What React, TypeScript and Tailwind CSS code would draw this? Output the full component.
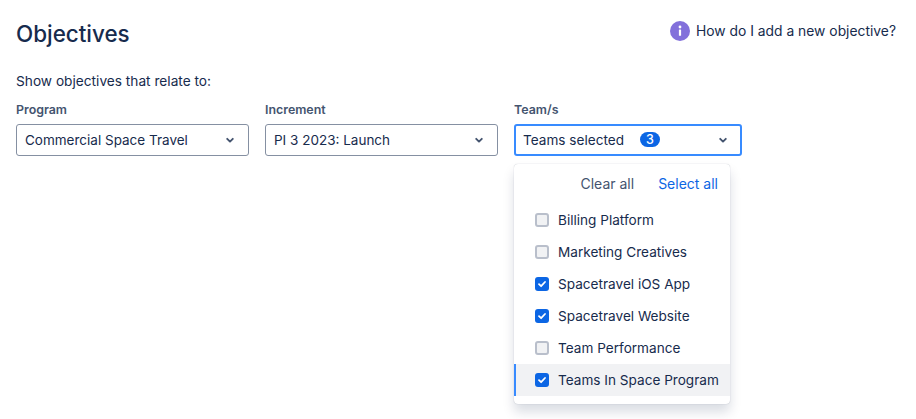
const TEAMS = [
  { name: "Billing Platform", checked: false },
  { name: "Marketing Creatives", checked: false },
  { name: "Spacetravel iOS App", checked: true },
  { name: "Spacetravel Website", checked: true },
  { name: "Team Performance", checked: false },
  { name: "Teams In Space Program", checked: true, active: true },
];

function Chevron() {
  return (
    <svg width="16" height="16" viewBox="0 0 16 16" fill="none" className="shrink-0">
      <path d="M5.2 6.8 8 9.6l2.8-2.8" stroke="#44546f" strokeWidth="1.9" strokeLinecap="round" strokeLinejoin="round" />
    </svg>
  );
}

function Checkbox({ checked }: { checked: boolean }) {
  if (!checked) {
    return <span className="h-[14px] w-[14px] shrink-0 rounded-[3px] border-2 border-[#b9bfcb] bg-[#f1f2f4]" />;
  }
  return (
    <span className="flex h-[14px] w-[14px] shrink-0 items-center justify-center rounded-[3px] bg-[#0c66e4]">
      <svg width="10" height="10" viewBox="0 0 10 10" fill="none">
        <path d="M2 5.2 4.1 7.2 8 3" stroke="#fff" strokeWidth="1.8" strokeLinecap="round" strokeLinejoin="round" />
      </svg>
    </span>
  );
}

function Field({ label, value, width }: { label: string; value: string; width: string }) {
  return (
    <div className={width}>
      <div className="mb-[6px] h-4 text-[12.4px] leading-4 font-semibold text-[#44546f]">{label}</div>
      <div className="flex h-8 items-center justify-between rounded-[3px] border border-[#8590a2] pr-[10px] pl-2 text-[13.5px] text-[#172b4d]">
        <span>{value}</span>
        <Chevron />
      </div>
    </div>
  );
}

export default function App() {
  return (
    <div className="h-[419px] w-[916px] overflow-hidden bg-white px-4 font-['Inter',sans-serif] text-[#172b4d]">
      <header className="flex items-start justify-between pt-[20px] pr-[4px]">
        <h1 className="text-[22.4px] leading-7 font-medium text-[#172b4d]">Objectives</h1>
        <a className="flex items-center gap-[6px] pt-[1px] text-[13.85px] leading-5">
          <span className="flex h-5 w-5 items-center justify-center rounded-full bg-[#8270db]">
            <svg width="10" height="12" viewBox="0 0 10 12" fill="#fff">
              <circle cx="5" cy="2" r="1.4" />
              <rect x="3.9" y="4.4" width="2.2" height="6.4" rx="0.6" />
            </svg>
          </span>
          How do I add a new objective?
        </a>
      </header>

      <p className="pt-[23px] text-[13.7px] leading-5">Show objectives that relate to:</p>

      <div className="mt-[11px] flex gap-4">
        <Field label="Program" value="Commercial Space Travel" width="w-[233px]" />
        <Field label="Increment" value="PI 3 2023: Launch" width="w-[233px]" />

        <div className="relative w-[228px]">
          <div className="mb-[6px] h-4 text-[12.4px] leading-4 font-semibold text-[#44546f]">Team/s</div>
          <div className="flex h-8 items-center justify-between rounded-[3px] border-2 border-[#388bff] pr-[9px] pl-[7px] text-[13.6px]">
            <span className="flex items-center gap-4">
              Teams selected
              <span className="flex h-[15px] w-5 items-center justify-center rounded-full bg-[#0c66e4] text-[12.5px] leading-none font-medium text-white">
                3
              </span>
            </span>
            <Chevron />
          </div>

          <div className="absolute top-[62px] left-0 w-[216px] rounded-[4px] bg-white pb-2 text-[13.6px] shadow-[0_8px_12px_rgba(9,30,66,0.15),0_0_1px_rgba(9,30,66,0.31)]">
            <div className="flex h-10 items-center justify-end gap-6 pr-3 text-sm text-[#44546f]">
              <span>Clear all</span>
              <span className="text-[#0c66e4]">Select all</span>
            </div>
            <ul>
              {TEAMS.map((t) => (
                <li
                  key={t.name}
                  className={`flex h-8 items-center gap-[9px] whitespace-nowrap ${
                    t.active ? "border-l-2 border-[#388bff] bg-[#f1f2f4] pl-[19px]" : "pl-[21px]"
                  }`}
                >
                  <Checkbox checked={t.checked} />
                  {t.name}
                </li>
              ))}
            </ul>
          </div>
        </div>
      </div>
    </div>
  );
}
